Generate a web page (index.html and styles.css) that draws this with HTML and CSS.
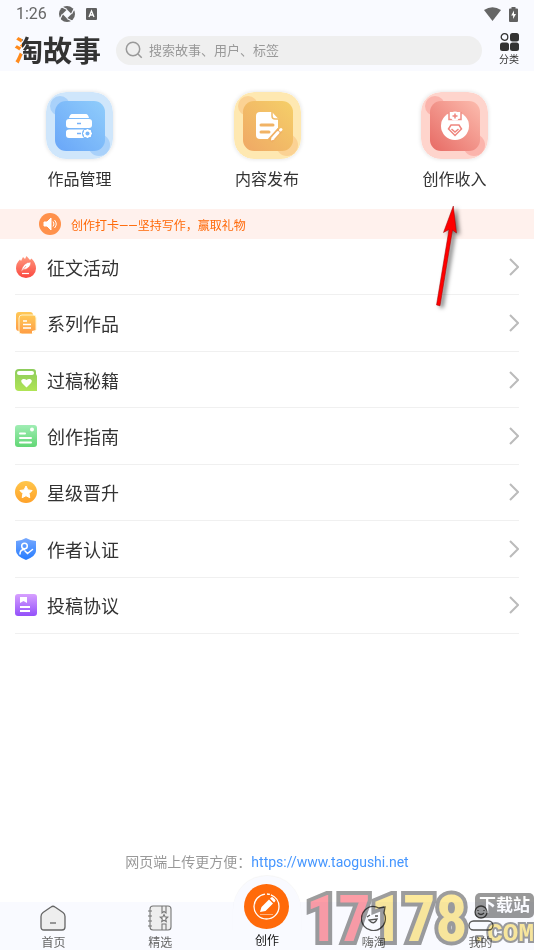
FILE: index.html
```html
<!DOCTYPE html>
<html lang="zh-CN">
<head>
<meta charset="utf-8">
<meta name="viewport" content="width=device-width, initial-scale=1">
<title>淘故事 - 创作</title>
<link rel="stylesheet" href="styles.css">
</head>
<body>
<svg class="defs" width="0" height="0" aria-hidden="true">
  <defs>
    <linearGradient id="blue" x1="0" y1="1" x2="1" y2="0"><stop stop-color="#69a6f8"/><stop offset="1" stop-color="#90cdfb"/></linearGradient>
    <linearGradient id="amber" x1="0" y1="1" x2="1" y2="0"><stop stop-color="#efa865"/><stop offset="1" stop-color="#f5cf68"/></linearGradient>
    <linearGradient id="coral" x1="0" y1="1" x2="1" y2="0"><stop stop-color="#e76a64"/><stop offset="1" stop-color="#fcbcae"/></linearGradient>
    <linearGradient id="fire" x1="0" y1="0" x2="0" y2="1"><stop stop-color="#ff9b80"/><stop offset="1" stop-color="#fb4840"/></linearGradient>
    <linearGradient id="gold" x1="0" y1="0" x2="0" y2="1"><stop stop-color="#ffc957"/><stop offset="1" stop-color="#ff9c45"/></linearGradient>
    <linearGradient id="lime" x1="0" y1="0" x2="0" y2="1"><stop stop-color="#8dcc5c"/><stop offset="1" stop-color="#b0e455"/></linearGradient>
    <linearGradient id="mint" x1="0" y1="0" x2="0" y2="1"><stop stop-color="#a0edb4"/><stop offset="1" stop-color="#62d775"/></linearGradient>
    <linearGradient id="star" x1="0" y1="0" x2="0" y2="1"><stop stop-color="#ffc64b"/><stop offset="1" stop-color="#ffa22a"/></linearGradient>
    <linearGradient id="shield" x1="0" y1="0" x2="0" y2="1"><stop stop-color="#77a9ff"/><stop offset="1" stop-color="#267cff"/></linearGradient>
    <linearGradient id="violet" x1="0" y1="0" x2="0" y2="1"><stop stop-color="#d7a0ff"/><stop offset="1" stop-color="#9350fa"/></linearGradient>
  </defs>
</svg>

<header class="header">
  <div class="status">
    <time>1:26</time>
    <svg width="16" height="16" viewBox="0 0 16 16"><circle cx="8" cy="8" r="8" fill="#666"/><path d="M8 3.500 12.500 8 8 12.500 3.500 8Z" fill="#f9faff"/><path d="M8 3.500 3 1M12.500 8 15 3M8 12.500 13 15M3.500 8 1 13" stroke="#f9faff" stroke-width="1.200"/></svg>
    <svg class="status-app" width="11" height="12" viewBox="0 0 11 12"><rect width="11" height="12" rx="1" fill="#5f5f5f"/><path d="m3 9 2.500-6L8 9M4 7h3" fill="none" stroke="#fff" stroke-width="1.300"/></svg>
    <span class="spacer"></span>
    <svg width="17" height="14" viewBox="0 0 17 14"><path d="M0 3Q8.500-2.500 17 3L8.500 14Z" fill="#666"/></svg>
    <svg class="battery" width="9" height="15" viewBox="0 0 9 15"><path d="M2.500 0h4v1.500H8a1 1 0 0 1 1 1V14a1 1 0 0 1-1 1H1a1 1 0 0 1-1-1V2.500a1 1 0 0 1 1-1h1.500Z" fill="#616161"/><path d="M5 3.500 2.200 8.500h1.900V12L7 7H5Z" fill="#fff"/></svg>
  </div>
  <div class="topbar">
    <h1 class="logo">淘故事</h1>
    <label class="search">
      <svg width="18" height="18" viewBox="0 0 18 18" fill="none" stroke="#999" stroke-width="1.500"><circle cx="8" cy="8" r="6.700"/><path d="m12.700 12.700 4 4"/></svg>
      <input type="search" placeholder="搜索故事、用户、标签" aria-label="搜索">
    </label>
    <button class="category" type="button">
      <svg width="19" height="18" viewBox="0 0 19 18" fill="#333"><circle cx="4.500" cy="4" r="3.300" fill="none" stroke="#333" stroke-width="1.300"/><rect x="10" width="9" height="8.500" rx="2.500"/><rect y="9.500" width="9" height="8.500" rx="2.500"/><rect x="10" y="9.500" width="9" height="8.500" rx="2.500"/></svg>
      <span>分类</span>
    </button>
  </div>
</header>

<main class="main">
  <nav class="features" aria-label="创作功能">
    <a class="feature" href="#works">
      <svg class="tile" width="67" height="67" viewBox="0 0 67 67"><rect width="67" height="67" rx="20" fill="#cfe6fb"/><g fill="#a9d1fa"><circle cx="14" cy="14" r="10"/><circle cx="53" cy="53" r="11"/></g><rect x="9" y="9" width="50" height="50" rx="11" fill="url(#blue)"/><path d="M26 22h14q2 0 3 4H23q1-4 3-4Z" fill="#fff"/><rect x="20" y="27" width="26" height="9" rx="3" fill="#fff"/><path d="M23 37.500h20l3 3-3 5.500H23q-3 0-3-3v-3q0-2.500 3-2.500Z" fill="#fff"/><path d="M31 31.500h4M31 41.500h4" stroke="#77b2f9" stroke-width="1.500"/><circle cx="41.500" cy="41.500" r="5.500" fill="#78b6f9"/><circle cx="41.500" cy="41.500" r="3" fill="none" stroke="#fff" stroke-width="2"/><path d="M41.500 37v9M37 41.500h9M38.300 38.300l6.400 6.400M44.700 38.300l-6.400 6.400" stroke="#fff" stroke-width="1.500"/><circle cx="41.500" cy="41.500" r="2" fill="#78b6f9"/></svg>
      <span>作品管理</span>
    </a>
    <a class="feature" href="#publish">
      <svg class="tile" width="67" height="67" viewBox="0 0 67 67"><rect width="67" height="67" rx="20" fill="#fee8b1"/><g fill="#fbd294"><circle cx="14" cy="14" r="10"/><circle cx="53" cy="53" r="11"/></g><rect x="9" y="9" width="50" height="50" rx="11" fill="url(#amber)"/><path d="M26 20h12l6 6.500V36L35 47h-9q-4 0-4-4V24q0-4 4-4Z" fill="#fff"/><path d="M38 20v4q0 3 3 3h3" fill="none" stroke="#f1bb67" stroke-width="1.500"/><path d="M27 33h12M27 40h8" stroke="#f1b365" stroke-width="3" stroke-linecap="round"/><path d="m36 49 10-11" stroke="#f0b064" stroke-width="6"/><path d="m39.500 45.500 4.500-5M46.500 38l.500-.500" stroke="#fff" stroke-width="3" stroke-linecap="round"/><path d="m37.500 45-.500 3.500 3.500-1Z" fill="#fff"/></svg>
      <span>内容发布</span>
    </a>
    <a class="feature" href="#income">
      <svg class="tile" width="67" height="67" viewBox="0 0 67 67"><rect width="67" height="67" rx="20" fill="#fed4cc"/><g fill="#fbb4ac"><circle cx="14" cy="14" r="10"/><circle cx="53" cy="53" r="11"/></g><rect x="9" y="9" width="50" height="50" rx="11" fill="url(#coral)"/><circle cx="34" cy="34" r="14" fill="#fff"/><path d="M28 20v7.500h12V20" fill="#fff" stroke="#ef8b82" stroke-width="1.500"/><circle cx="34" cy="24" r="4.500" fill="#fff"/><path d="M34 21.500v5M31.500 24h5M30 33h8l2.500 4L34 43.500 27.500 37Zm.500 4 3.500 3 3.500-3" fill="none" stroke="#ee857e" stroke-width="1.500"/></svg>
      <span>创作收入</span>
    </a>
    <svg class="pointer" width="30" height="108" viewBox="0 0 30 108" aria-hidden="true"><path d="M21.300 2 11.500 28.500l5.500-3L4.500 101l3.500 .800L20.500 26l4 3Z" fill="#f00" stroke="#900" stroke-width=".500"/></svg>
  </nav>

  <a class="notice" href="#checkin">
    <svg width="22" height="22" viewBox="0 0 22 22"><circle cx="11" cy="11" r="11" fill="#ff914b"/><path d="M5 9h3l4-4v12l-4-4H5Z" fill="#fff" stroke="#fff" stroke-linejoin="round"/><path d="M14 8.500q2 2.500 0 5M15.500 7q3.500 4 0 8" fill="none" stroke="#fff"/></svg>
    <span>创作打卡——坚持写作，赢取礼物</span>
  </a>

  <ul class="menu">
    <li><a href="#essay"><svg class="icon" viewBox="0 0 22 22"><path d="M1 12.500Q1 7 5 3.500L6 5l2-4 2 2 1.500-3L15 4l1.500-1.500Q21 7 21 12.500a10 9.500 0 0 1-20 0Z" fill="url(#fire)"/><path d="M6 15.500Q8 6 16 6q0 6.500-8 8M6 16l5-6" fill="#fff" stroke="#fa6b59" stroke-width=".600"/><path d="M7 17.500h7" stroke="#fff" stroke-width="1.200"/></svg><span>征文活动</span><svg class="chevron" viewBox="0 0 10 18"><path d="m1 1 8 8-8 8"/></svg></a></li>
    <li><a href="#series"><svg class="icon" viewBox="0 0 22 22"><rect x="1" width="17" height="19" rx="3" fill="url(#gold)"/><path d="M7 3h11q3 0 3 3v12l-4 4H7q-3 0-3-3V6q0-3 3-3Z" fill="url(#gold)" stroke="#fff2c9" stroke-width="1"/><path d="M8 9h4M8 12.500h8M8 16h8" stroke="#fff" stroke-width="1.500"/><path d="M17 22v-3l4-1Z" fill="#fff"/></svg><span>系列作品</span><svg class="chevron" viewBox="0 0 10 18"><path d="m1 1 8 8-8 8"/></svg></a></li>
    <li><a href="#tips"><svg class="icon" viewBox="0 0 22 22"><path d="M4 0h14q3 0 3 3v2l1 2v15H4q-4 0-4-4V4q0-4 4-4Z" fill="url(#lime)"/><rect x="2" y="2" width="17" height="4" rx="2" fill="#fff"/><path d="M11.500 18.500 7 14q-2-3 1-4 2-.500 3.500 1Q13 9.500 15 10q3 1 1 4Z" fill="#fff"/></svg><span>过稿秘籍</span><svg class="chevron" viewBox="0 0 10 18"><path d="m1 1 8 8-8 8"/></svg></a></li>
    <li><a href="#guide"><svg class="icon" viewBox="0 0 22 22"><rect width="22" height="22" rx="3" fill="url(#mint)"/><circle cx="17" cy="4.500" r="2" fill="#fff"/><path d="M5 8.500h5M5 13h11M5 17.500h11" stroke="#fff" stroke-width="2" stroke-linecap="round"/></svg><span>创作指南</span><svg class="chevron" viewBox="0 0 10 18"><path d="m1 1 8 8-8 8"/></svg></a></li>
    <li><a href="#level"><svg class="icon" viewBox="0 0 22 22"><circle cx="11" cy="11" r="11" fill="url(#star)"/><path d="m11 5 1.900 3.900 4.200.600-3 3 .700 4.200-3.800-2-3.800 2 .700-4.200-3-3 4.200-.600Z" fill="#fff" stroke="#fff" stroke-linejoin="round"/></svg><span>星级晋升</span><svg class="chevron" viewBox="0 0 10 18"><path d="m1 1 8 8-8 8"/></svg></a></li>
    <li><a href="#verify"><svg class="icon" viewBox="0 0 22 22"><path d="M11 0q5 3 10 3v10q0 5-10 9Q1 18 1 13V3q5 0 10-3Z" fill="url(#shield)"/><g fill="none" stroke="#fff" stroke-width="1.500" stroke-linecap="round"><circle cx="9.500" cy="8" r="2.800"/><path d="M5 16q0-4.500 4.500-4.500M10 13l2.500 2.500 5-4"/></g></svg><span>作者认证</span><svg class="chevron" viewBox="0 0 10 18"><path d="m1 1 8 8-8 8"/></svg></a></li>
    <li><a href="#terms"><svg class="icon" viewBox="0 0 22 22"><rect width="22" height="22" rx="3" fill="url(#violet)"/><path d="M5 3h7v6L8.500 7 5 9Z" fill="#fff"/><path d="M5 13h10M5 17h10" stroke="#fff" stroke-width="2"/></svg><span>投稿协议</span><svg class="chevron" viewBox="0 0 10 18"><path d="m1 1 8 8-8 8"/></svg></a></li>
  </ul>

  <p class="web-link">网页端上传更方便：<a href="https://www.taogushi.net">https://www.taogushi.net</a></p>
</main>

<nav class="tabs" aria-label="主导航">
  <a class="tab" href="#home"><svg width="26" height="26" viewBox="0 0 26 26" fill="#eee" stroke="#666" stroke-width="1.300"><path d="M3 7.500 11 2q2-1.500 4 0l8 5.500q2 1.500 2 4V22q0 3-3 3H4q-3 0-3-3V11.500q0-2.500 2-4Z"/><path d="M10 18h6"/></svg><span>首页</span></a>
  <a class="tab" href="#picks"><svg width="26" height="26" viewBox="0 0 26 26" fill="none" stroke="#777" stroke-width="1.100"><rect x="3" y="1" width="21" height="24" rx="3" fill="#eee"/><path d="M1 6h4M1 11h4M1 16h4M1 21h4M15 1v7l2-1.500L19 8V1M15 25v-6h4v6"/><path d="m17 9.500 1.100 2.400 2.600.300-2 1.800.600 2.600-2.300-1.400-2.300 1.400.600-2.600-2-1.800 2.600-.300Z" fill="#fff"/></svg><span>精选</span></a>
  <a class="tab tab-create" href="#create" aria-current="page"><span class="create-ring"><svg width="45" height="45" viewBox="0 0 45 45"><circle cx="22.500" cy="22.500" r="22.500" fill="#ff6a0a"/><circle cx="22.500" cy="22.500" r="12.500" fill="none" stroke="#fff" stroke-width="1.300" stroke-dasharray="57 2 3 1"/><path d="m16 28 1.500-5L25 15.500l4 4-7.500 7.500Zm10-13.500 1-1q1-1 2 0l2 2q1 1 0 2l-1 1Z" fill="#fff"/><path d="M16 30.500h13" stroke="#ffd0b0" stroke-width=".700"/></svg></span><span>创作</span></a>
  <a class="tab" href="#chat"><svg width="26" height="26" viewBox="0 0 26 26" fill="none" stroke="#555" stroke-width="1.300"><path d="M4 5A12 12 0 1 0 23 8l1-6-6 1Q10-1 4 5Z"/><path d="M6 12l3-2M14 11h3M8 15q5 6 8-1Z"/></svg><span>嗨淘</span></a>
  <a class="tab" href="#me"><svg width="26" height="26" viewBox="0 0 26 26" fill="none" stroke="#555" stroke-width="1.300"><circle cx="13" cy="7" r="6"/><rect x="1" y="16" width="24" height="9" rx="4.500"/><path d="M10 8q3 3 6 0M10 5v1M16 5v1"/></svg><span>我的</span></a>
  <div class="watermark"><b class="mark-digits"><span class="mark-red">17</span>178</b><span class="mark-side"><b class="mark-badge">下载站</b><b class="mark-com">.COM</b></span></div>
</nav>
</body>
</html>
```
FILE: styles.css
```css
* { box-sizing: border-box; }
body {
  margin: 0;
  min-height: 100vh;
  display: flex;
  flex-direction: column;
  font-family: Roboto, "Noto Sans CJK SC", sans-serif;
  color: #333;
  background: #fff;
}
a { color: inherit; text-decoration: none; }
svg { flex: none; }
.defs { position: absolute; }

.header { background: #f9faff; height: 71px; }
.status {
  display: flex;
  align-items: center;
  height: 28px;
  padding: 0 16px;
  font-size: 16px;
  line-height: 28px;
  color: #666;
}
.status time { margin-right: 12px; }
.status-app { margin-left: 11px; }
.spacer { flex: 1; }
.battery { margin-left: 8px; }
.topbar {
  display: flex;
  align-items: center;
  height: 44px;
  padding: 0 15px 0 14px;
}
.logo {
  margin: 0 15px 0 0;
  padding-top: 3px;
  font-size: 29px;
  line-height: 40px;
  font-weight: 700;
  color: transparent;
  background: linear-gradient(90deg, #ff8a1c 8px, #333 8px);
  background-clip: text;
  -webkit-background-clip: text;
}
.search {
  flex: 1;
  display: flex;
  align-items: center;
  gap: 6px;
  height: 29px;
  padding: 0 9px;
  border-radius: 15px;
  background: #efefef;
}
.search input {
  flex: 1;
  min-width: 0;
  padding: 0;
  border: 0;
  outline: 0;
  background: none;
  font: inherit;
  font-size: 13px;
}
.search input::placeholder { color: #999; }
.category {
  display: flex;
  flex-direction: column;
  align-items: center;
  gap: 2px;
  margin-left: 17px;
  padding: 0;
  border: 0;
  background: none;
  font: inherit;
  font-size: 10px;
  line-height: 14px;
  color: #333;
}

.main { flex: 1; display: flex; flex-direction: column; }
.features {
  position: relative;
  display: flex;
  justify-content: space-between;
  height: 138px;
  padding: 21px 46px 0;
}
.feature {
  display: flex;
  flex-direction: column;
  align-items: center;
  gap: 9px;
  width: 67px;
  font-size: 16px;
  line-height: 24px;
  white-space: nowrap;
}
.tile { border-radius: 20px; box-shadow: 0 0 4px #0002; }
.pointer {
  position: absolute;
  z-index: 2;
  top: 133px;
  right: 72px;
  filter: drop-shadow(3px 2px 2px #0008);
}
.notice {
  display: flex;
  align-items: center;
  gap: 10px;
  height: 30px;
  padding: 0 39px;
  background: #fff1ed;
  color: #ff6a0a;
  font-size: 12px;
}
.menu {
  display: flex;
  flex-direction: column;
  min-height: 395px;
  margin: 0;
  padding: 0 15px;
  list-style: none;
}
.menu li { flex: 1; display: flex; border-bottom: 1px solid #f0f0f0; }
.menu a {
  flex: 1;
  display: flex;
  align-items: center;
  gap: 10px;
  font-size: 18px;
}
.menu span { flex: 1; }
.icon { width: 22px; height: 22px; }
.chevron {
  width: 10px;
  height: 18px;
  fill: none;
  stroke: #bbb;
  stroke-width: 2;
}
.web-link {
  margin: auto 0 30px;
  text-align: center;
  font-size: 14px;
  line-height: 20px;
  color: #999;
}
.web-link a { color: #4596ff; }

.tabs {
  position: relative;
  display: flex;
  height: 48px;
  background: #f9faff;
}
.tab {
  flex: 1;
  display: flex;
  flex-direction: column;
  align-items: center;
  gap: 4px;
  padding-top: 3px;
  font-size: 12px;
  line-height: 16px;
  color: #666;
}
.tab-create { margin-top: -26px; padding: 0; gap: 1px; color: #111; }
.create-ring {
  display: flex;
  justify-content: center;
  width: 68px;
  height: 56px;
  padding-top: 8px;
  border-radius: 34px 34px 0 0;
  background: #f9faff;
  box-shadow: 0 -1px 1px #0000000a;
}

.watermark {
  position: absolute;
  right: 0;
  bottom: 0;
  display: flex;
  align-items: flex-end;
  gap: 4px;
  mix-blend-mode: multiply;
  pointer-events: none;
  paint-order: stroke fill;
}
.mark-digits {
  font-family: "Liberation Sans Narrow", "Roboto Condensed", "Liberation Sans", sans-serif;
  font-size: 64px;
  line-height: 60px;
  color: #fdea9c;
  -webkit-text-stroke: 8px #9d9d9d;
}
.mark-red { color: #fd9da6; }
.mark-side {
  display: flex;
  flex-direction: column;
  align-items: flex-end;
}
.mark-badge {
  padding: 0 4px;
  border-radius: 5px;
  background: #999;
  color: #fff;
  font-size: 17px;
  line-height: 25px;
}
.mark-com {
  font-family: "Liberation Mono", monospace;
  font-size: 26px;
  line-height: 32px;
  color: #fdea9c;
  -webkit-text-stroke: 4px #9d9d9d;
}
```
